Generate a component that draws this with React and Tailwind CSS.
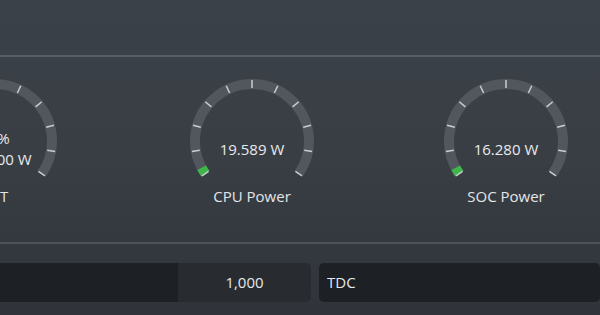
import React from "react";

const CX = 127;
const CY = 84;
const R = 57;
const START = 145;
const SWEEP = 250;

function pt(angle, r) {
  const a = (angle * Math.PI) / 180;
  return [CX + r * Math.cos(a), CY + r * Math.sin(a)];
}

function arcPath(a0, a1, r) {
  const [x0, y0] = pt(a0, r);
  const [x1, y1] = pt(a1, r);
  const large = a1 - a0 > 180 ? 1 : 0;
  return `M ${x0} ${y0} A ${r} ${r} 0 ${large} 1 ${x1} ${y1}`;
}

function Gauge({ lines, label, fill }) {
  const ticks = [];
  for (let i = 0; i <= 10; i++) {
    const a = START + (SWEEP / 10) * i;
    const [x0, y0] = pt(a, R - 4);
    const [x1, y1] = pt(a, R + 4);
    ticks.push(
      <line key={i} x1={x0} y1={y0} x2={x1} y2={y1} stroke="#c9cdd1" strokeWidth="1.5" />
    );
  }
  return (
    <div className="relative w-[254px] h-[184px] shrink-0">
      <svg width="254" height="184" className="absolute left-0 top-0">
        <path d={arcPath(START, START + SWEEP, R)} fill="none" stroke="#52575e" strokeWidth="10" />
        {fill > 0 && (
          <path d={arcPath(START, START + fill, R)} fill="none" stroke="#3fb54a" strokeWidth="10" />
        )}
        {ticks}
      </svg>
      <div className="absolute left-0 right-0 top-[72px] h-[40px] flex flex-col items-center justify-center text-[15px] leading-[21px] text-[#e8eaec]">
        {lines.map((l, i) => (
          <div key={i} className="whitespace-nowrap">{l}</div>
        ))}
      </div>
      <div className="absolute left-0 right-0 top-[129px] text-center text-[15px] leading-[20px] text-[#e4e6e8] whitespace-nowrap">
        {label}
      </div>
    </div>
  );
}

export default function App() {
  return (
    <div
      className="w-[600px] h-[315px] overflow-hidden flex flex-col bg-gradient-to-b from-[#3b4148] via-[#393e45] to-[#30343a]"
      style={{ fontFamily: '"Open Sans", "Noto Sans", sans-serif' }}
    >
      <div className="h-[55px] shrink-0" />
      <div className="h-[2px] shrink-0 bg-[#575d64]" />
      <div className="h-[185px] shrink-0 flex ml-[-129px]">
        <div className="w-[254px] shrink-0 flex ml-[-3px] mr-[3px]">
          <Gauge lines={["13%", "100.000 W"]} label="PPT" fill={0} />
        </div>
        <Gauge lines={["19.589 W"]} label="CPU Power" fill={7} />
        <Gauge lines={["16.280 W"]} label="SOC Power" fill={7} />
      </div>
      <div className="h-[2px] shrink-0 bg-[#4d5259]" />
      <div className="flex-1 pt-[19px] flex gap-[8px] ml-[-10px]">
        <div className="flex h-[39px] w-[321px] rounded-[5px] overflow-hidden">
          <div className="w-[188px] bg-[#1d2024]" />
          <div className="flex-1 bg-[#282c31] flex items-center justify-center text-[15px] text-[#e6e8ea]">
            1,000
          </div>
        </div>
        <div className="flex-1 h-[39px] rounded-[5px] bg-[#1d2024] flex items-center pl-[8px] text-[15px] text-[#e6e8ea]">
          TDC
        </div>
      </div>
    </div>
  );
}
